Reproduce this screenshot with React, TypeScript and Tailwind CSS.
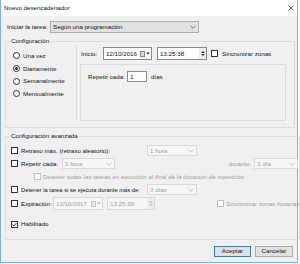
import type { ReactNode } from "react"

const font = "font-['Liberation_Sans',Arial,sans-serif]"

function Chevron({ disabled }: { disabled?: boolean }) {
  return (
    <svg width="6" height="4" viewBox="0 0 6 4" className="shrink-0">
      <path
        d="M0.5 0.8 L3 3.2 L5.5 0.8"
        fill="none"
        stroke={disabled ? "#b5b5b5" : "#555"}
        strokeWidth="0.8"
      />
    </svg>
  )
}

function Check({ checked, disabled }: { checked?: boolean; disabled?: boolean }) {
  return (
    <span
      className={
        "flex size-[7px] shrink-0 items-center justify-center border bg-white " +
        (disabled ? "border-[#c4c4c4]" : "border-[#333]")
      }
    >
      {checked ? (
        <svg width="5" height="5" viewBox="0 0 5 5">
          <path d="M0.6 2.6 L2 4 L4.5 0.8" fill="none" stroke="#333" strokeWidth="0.9" />
        </svg>
      ) : null}
    </span>
  )
}

function Radio({ checked }: { checked?: boolean }) {
  return (
    <span className="flex size-[7px] shrink-0 items-center justify-center rounded-full border border-[#333] bg-white">
      {checked ? <span className="size-[3px] rounded-full bg-[#333]" /> : null}
    </span>
  )
}

function Select({
  value,
  className,
  disabled,
}: {
  value: string
  className: string
  disabled?: boolean
}) {
  return (
    <div
      className={
        "flex h-[11px] shrink-0 items-center justify-between border pl-[2px] pr-[2px] " +
        (disabled
          ? "border-[#d9d9d9] bg-[#f6f6f6] text-[#a0a0a0] "
          : "border-[#adadad] bg-[#e1e1e1] ") +
        className
      }
    >
      <span className="whitespace-nowrap">{value}</span>
      <Chevron disabled={disabled} />
    </div>
  )
}

function DateBox({ value, disabled, className }: { value: string; disabled?: boolean; className: string }) {
  return (
    <div
      className={
        "flex h-[13px] shrink-0 items-center justify-between border pl-[2px] pr-[1px] " +
        (disabled ? "border-[#d9d9d9] bg-[#f6f6f6] text-[#a0a0a0] " : "border-[#8a8a8a] bg-white ") +
        className
      }
    >
      <span>{value}</span>
      <span className="flex items-center gap-[1px]">
        <span className={"h-[6px] w-[5px] border " + (disabled ? "border-[#c8c8c8] bg-[#e8e8e8]" : "border-[#888] bg-[#dcdcdc]")} />
        <svg width="4" height="3" viewBox="0 0 4 3">
          <path d="M0 0.5 L4 0.5 L2 2.8 Z" fill={disabled ? "#bdbdbd" : "#444"} />
        </svg>
      </span>
    </div>
  )
}

function TimeBox({ value, disabled, className }: { value: string; disabled?: boolean; className: string }) {
  return (
    <div
      className={
        "flex h-[13px] shrink-0 items-center justify-between border pl-[2px] " +
        (disabled ? "border-[#d9d9d9] bg-[#f6f6f6] text-[#a0a0a0] " : "border-[#8a8a8a] bg-white ") +
        className
      }
    >
      <span>{value}</span>
      <span className="flex h-full w-[7px] flex-col items-center justify-center gap-[1px] bg-[#ececec]">
        <svg width="4" height="2" viewBox="0 0 4 2">
          <path d="M0 2 L2 0 L4 2 Z" fill={disabled ? "#bdbdbd" : "#444"} />
        </svg>
        <svg width="4" height="2" viewBox="0 0 4 2">
          <path d="M0 0 L4 0 L2 2 Z" fill={disabled ? "#bdbdbd" : "#444"} />
        </svg>
      </span>
    </div>
  )
}

function Group({ title, children, className }: { title: string; children: ReactNode; className?: string }) {
  return (
    <fieldset className={"w-[290px] border border-[#dcdcdc] " + (className ?? "")}>
      <legend className="ml-[4px] h-[8px] px-[1px] leading-[8px]">{title}</legend>
      {children}
    </fieldset>
  )
}

export default function App() {
  return (
    <div className={"h-[264px] w-[300px] bg-white text-[6.2px] leading-[8px] text-[#111] " + font}>
      <div className="h-[263px] w-[298px] border-x border-b border-[#7eb0e3] bg-[#f0f0f0]">
        {/* title bar */}
        <div className="flex h-[16px] items-center justify-between bg-white pl-[3px] pr-[3px]">
          <span className="text-[6.2px]">Nuevo desencadenador</span>
          <svg width="6" height="6" viewBox="0 0 6 6">
            <path d="M0.5 0.5 L5.5 5.5 M5.5 0.5 L0.5 5.5" stroke="#444" strokeWidth="0.8" />
          </svg>
        </div>

        <div className="pl-[4px] pr-[2px] pt-[5px]">
          <div className="flex h-[12px] items-center">
            <span className="w-[45px] whitespace-nowrap pl-[2px]">Iniciar la tarea:</span>
            <Select value="Según una programación" className="h-[12px] w-[149px]" />
          </div>

          <Group title="Configuración" className="mt-[4px]">
            <div className="flex h-[82px]">
              <div className="h-[75px] w-[71px] border-r border-[#dcdcdc] pl-[7px] pt-[4.5px]">
                {["Una vez", "Diariamente", "Semanalmente", "Mensualmente"].map((label) => (
                  <div key={label} className="flex h-[12.7px] items-center gap-[3px]">
                    <Radio checked={label === "Diariamente"} />
                    <span>{label}</span>
                  </div>
                ))}
              </div>
              <div className="flex-1">
                <div className="mt-[2px] flex items-center pl-[4px]">
                  <span className="w-[22px]">Inicio:</span>
                  <DateBox value="12/10/2016" className="w-[49px]" />
                  <TimeBox value="13:25:38" className="ml-[5px] w-[50px]" />
                  <span className="ml-[4px]">
                    <Check />
                  </span>
                  <span className="ml-[4px] whitespace-nowrap">Sincronizar zonas</span>
                </div>
                <div className="ml-[3px] mt-[4px] h-[57px] w-[206px] border border-[#dcdcdc] pl-[7px] pt-[6px]">
                  <div className="flex h-[11px] items-center">
                    <span className="w-[39px] whitespace-nowrap">Repetir cada:</span>
                    <div className="flex h-[11px] w-[20px] items-center border border-[#8a8a8a] bg-white pl-[2px]">1</div>
                    <span className="ml-[4px]">días</span>
                  </div>
                </div>
              </div>
            </div>
          </Group>

          <Group title="Configuración avanzada" className="mt-[4px]">
            <div className="pb-[9px] pl-[5px] pt-[5px]">
              <div className="flex h-[11px] items-center">
                <Check />
                <span className="ml-[3px] w-[126px] whitespace-nowrap">Retraso máx. (retraso aleatorio):</span>
                <Select value="1 hora" disabled className="w-[50px]" />
              </div>
              <div className="mt-[2px] flex h-[11px] items-center">
                <Check />
                <span className="ml-[3px] w-[41px] whitespace-nowrap">Repetir cada:</span>
                <Select value="1 hora" disabled className="w-[53px]" />
                <span className="ml-auto text-[#a0a0a0]">durante:</span>
                <Select value="1 día" disabled className="ml-[3px] mr-[1px] w-[44px]" />
              </div>
              <div className="mt-[2px] flex h-[11px] items-center pl-[23px] text-[#a0a0a0]">
                <Check disabled />
                <span className="ml-[2px] whitespace-nowrap">
                  Detener todas las tareas en ejecución al final de la duración de repetición
                </span>
              </div>
              <div className="mt-[2px] flex h-[11px] items-center">
                <Check />
                <span className="ml-[3px] w-[126px] whitespace-nowrap text-[5.8px]">
                  Detener la tarea si se ejecuta durante más de:
                </span>
                <Select value="3 días" disabled className="w-[50px]" />
              </div>
              <div className="mt-[2px] flex h-[13px] items-center overflow-hidden">
                <Check />
                <span className="ml-[3px] w-[32px]">Expiración:</span>
                <DateBox value="12/10/2017" disabled className="w-[50px]" />
                <TimeBox value="13:25:39" disabled className="ml-[4px] w-[48px]" />
                <span className="ml-[62px]">
                  <Check disabled />
                </span>
                <span className="ml-[2px] whitespace-nowrap text-[#a0a0a0]">Sincronizar zonas horarias</span>
              </div>
              <div className="mt-[8px] flex h-[12px] items-center">
                <Check checked />
                <span className="ml-[3px]">Habilitado</span>
              </div>
            </div>
          </Group>

          <div className="mr-[2px] mt-[6px] flex justify-end gap-[4px]">
            <button className="flex h-[11px] w-[37px] items-center justify-center border border-[#3c7fb1] bg-[#e1e1e1] leading-none">
              Aceptar
            </button>
            <button className="flex h-[11px] w-[38px] items-center justify-center border border-[#adadad] bg-[#e1e1e1] leading-none">
              Cancelar
            </button>
          </div>
        </div>
      </div>
    </div>
  )
}
